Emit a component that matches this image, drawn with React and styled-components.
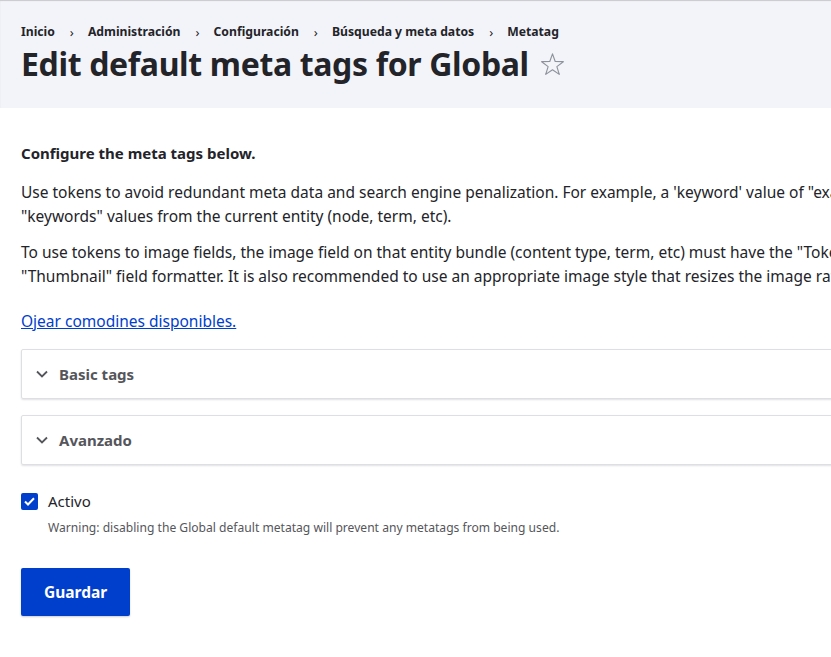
import styled, { createGlobalStyle } from 'styled-components'

const Global = createGlobalStyle`
  html, body {
    margin: 0;
    padding: 0;
    background: #fff;
    overflow: hidden;
  }
  body {
    font-family: "Noto Sans", Roboto, sans-serif;
    color: #232429;
  }
`

// Page is wider than the window, as in the original layout
const Page = styled.div`
  width: 1200px;
`

const Header = styled.header`
  background: #f3f4f9;
  box-shadow: inset 0 1px 1px rgba(0, 0, 0, 0.18);
  padding: 24px 21px 0;
  height: 108px;
  box-sizing: border-box;
`

const Crumbs = styled.ol`
  display: flex;
  list-style: none;
  margin: 0;
  padding: 0;
  font-size: 12.2px;
  font-weight: 700;
  line-height: 16px;
`

const Crumb = styled.li`
  display: flex;
  align-items: center;
  &:not(:last-child)::after {
    content: '›';
    font-weight: 400;
    margin: 0 14px 0 15px;
    font-size: 13px;
  }
`

const TitleRow = styled.div`
  display: flex;
  align-items: center;
  gap: 11px;
  margin-top: 4px;
`

const Title = styled.h1`
  margin: 0;
  font-size: 32px;
  font-weight: 700;
  line-height: 40px;
  letter-spacing: -0.35px;
`

const Main = styled.main`
  padding: 33px 21px 40px;
`

const Lead = styled.p`
  margin: 0 0 15px;
  font-weight: 700;
  font-size: 15px;
  line-height: 24px;
`

const Para = styled.p`
  margin: 0 0 12px;
  font-size: 15.5px;
  line-height: 24px;
  white-space: nowrap;
`

const Link = styled.a`
  display: inline-block;
  color: #003ecc;
  text-decoration: underline;
  font-size: 15.5px;
  line-height: 24px;
  margin: 9px 0 16px;
`

const Details = styled.div`
  border: 1px solid #dedfe4;
  border-radius: 2px;
  box-shadow: 0 1px 2px rgba(0, 0, 0, 0.12);
  height: 50px;
  display: flex;
  align-items: center;
  padding-left: 13px;
  gap: 10px;
  margin-bottom: 16px;
  box-sizing: border-box;
`

const Summary = styled.span`
  font-weight: 700;
  font-size: 15px;
  color: #55565b;
`

const CheckRow = styled.label`
  display: flex;
  align-items: center;
  gap: 10px;
  margin-top: 28px;
  font-size: 15px;
  line-height: 17px;
`

const Box = styled.span`
  width: 17px;
  height: 17px;
  border-radius: 2px;
  background: #003ecc;
  display: flex;
  align-items: center;
  justify-content: center;
`

const Help = styled.div`
  margin: 9px 0 0 27px;
  font-size: 12.1px;
  color: #55565b;
`

const Button = styled.button`
  margin-top: 32px;
  background: #003ecc;
  color: #fff;
  border: none;
  border-radius: 2px;
  height: 48px;
  padding: 0 23px;
  font-family: inherit;
  font-weight: 700;
  font-size: 15.5px;
  box-shadow: 0 1px 2px rgba(0, 0, 0, 0.2);
`

const Chevron = () => (
  <svg width="14" height="14" viewBox="0 0 14 14">
    <path d="M2 4.5 L7 9.5 L12 4.5" fill="none" stroke="#55565b" strokeWidth="1.8" />
  </svg>
)

function App() {
  const crumbs = ['Inicio', 'Administración', 'Configuración', 'Búsqueda y meta datos', 'Metatag']
  return (
    <>
      <Global />
      <Page>
        <Header>
          <Crumbs>
            {crumbs.map((c) => (
              <Crumb key={c}>{c}</Crumb>
            ))}
          </Crumbs>
          <TitleRow>
            <Title>Edit default meta tags for Global</Title>
            <svg width="25" height="25" viewBox="0 0 24 24">
              <path
                d="M12 1.8 L14.6 9.1 L22.4 9.3 L16.2 14 L18.5 21.5 L12 17.1 L5.5 21.5 L7.8 14 L1.6 9.3 L9.4 9.1 Z"
                fill="none"
                stroke="#8e929c"
                strokeWidth="1.1"
                strokeLinejoin="round"
              />
            </svg>
          </TitleRow>
        </Header>
        <Main>
          <Lead>Configure the meta tags below.</Lead>
          <Para>
            Use tokens to avoid redundant meta data and search engine penalization. For example, a 'keyword' value of "example" will be shown on all content using this configuration, whereas using the [node:field_keywords] automatically inserts the
            <br />
            "keywords" values from the current entity (node, term, etc).
          </Para>
          <Para>
            To use tokens to image fields, the image field on that entity bundle (content type, term, etc) must have the "Token" display settings enabled and the
            <br />
            "Thumbnail" field formatter. It is also recommended to use an appropriate image style that resizes the image rather than cropping it.
          </Para>
          <Link href="#">Ojear comodines disponibles.</Link>
          <Details>
            <Chevron />
            <Summary>Basic tags</Summary>
          </Details>
          <Details>
            <Chevron />
            <Summary>Avanzado</Summary>
          </Details>
          <CheckRow>
            <Box>
              <svg width="11" height="9" viewBox="0 0 11 9">
                <path d="M1 4.5 L4 7.5 L10 1.2" fill="none" stroke="#fff" strokeWidth="2" />
              </svg>
            </Box>
            Activo
          </CheckRow>
          <Help>Warning: disabling the Global default metatag will prevent any metatags from being used.</Help>
          <Button>Guardar</Button>
        </Main>
      </Page>
    </>
  )
}

export default App
